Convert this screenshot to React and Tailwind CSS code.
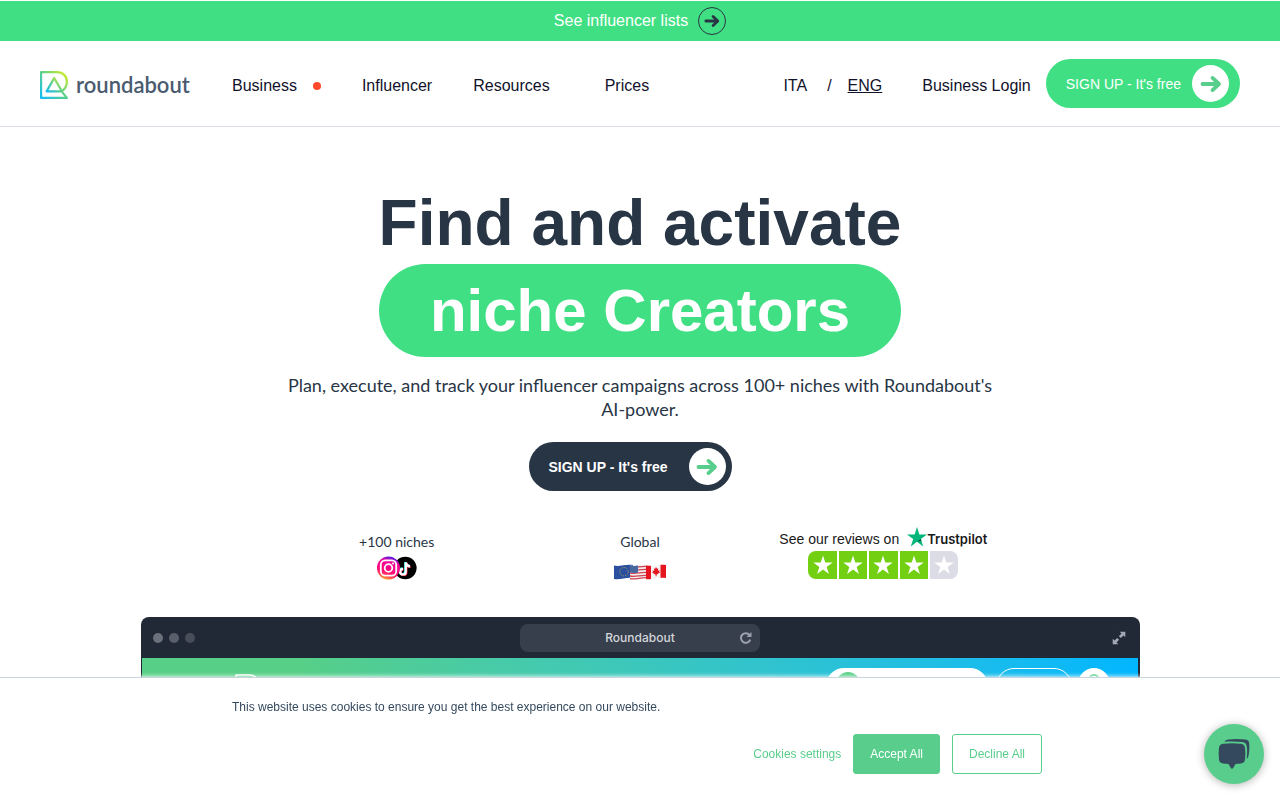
import React, { useState } from 'react';

const STAR = 'M12 1.6l2.5 7.7h8.1l-6.6 4.8 2.5 7.7L12 17l-6.5 4.8L8 14.1 1.4 9.3h8.1z';

function Arrow({ className }) {
  return (
    <svg viewBox="0 0 22 18" className={className} fill="none" stroke="currentColor" strokeWidth="3.8" strokeLinecap="round" strokeLinejoin="round">
      <path d="M2.5 9H18M12.5 2.9L19 9l-6.5 6.1" />
    </svg>
  );
}

function LogoMark({ className, stroke = 'url(#logo)', strokeWidth = 2.2 }) {
  return (
    <svg viewBox="0 0 28 28" className={className} fill="none" stroke={stroke} strokeWidth={strokeWidth} strokeLinejoin="round" strokeLinecap="round">
      <defs>
        <linearGradient id="logo" x1="0" y1="1" x2="1" y2="0">
          <stop offset="0" stopColor="#12bdf5" />
          <stop offset="0.5" stopColor="#5ad08c" />
          <stop offset="1" stopColor="#dcee1c" />
        </linearGradient>
      </defs>
      <path d="M1.1 1.1H17c6 0 9.9 4.2 9.9 9.6 0 4-1.9 7.3-5.3 9.7L26.9 26.9H1.1z" />
      <path d="M14.2 7L6.6 20.400h13.400c1 0 1.500-.8 1-1.600z" />
    </svg>
  );
}

function SocialIcons() {
  return (
    <svg viewBox="0 0 40 24" className="h-6 w-10">
      <defs>
        <linearGradient id="insta" x1="0.2" y1="1" x2="0.5" y2="0">
          <stop offset="0" stopColor="#ffc20e" />
          <stop offset="0.22" stopColor="#ff3a5c" />
          <stop offset="0.4" stopColor="#ff0a78" />
          <stop offset="0.8" stopColor="#f0079b" />
          <stop offset="1" stopColor="#5a1be0" />
        </linearGradient>
      </defs>
      <circle cx="28.3" cy="12" r="11.3" fill="#000" />
      <g fill="none" strokeWidth="2.2">
        <path d="M28.2 6v9.200a2.800 2.800 0 1 1-2.800-2.800M28.200 6c.3 2.300 1.800 3.700 4.200 3.900" stroke="#25f4ee" />
        <path d="M29.400 7v9.200a2.800 2.800 0 1 1-2.800-2.800M29.400 7c.3 2.300 1.800 3.700 4.200 3.900" stroke="#fe2c55" />
        <path d="M28.800 6.500v9.200a2.800 2.800 0 1 1-2.800-2.800M28.800 6.500c.3 2.300 1.800 3.700 4.200 3.900" stroke="#fff" />
      </g>
      <circle cx="11.5" cy="12" r="11.5" fill="url(#insta)" />
      <g fill="none" stroke="#fff" strokeWidth="1.8">
        <rect x="3.8" y="4.300" width="15.400" height="15.400" rx="4.400" />
        <circle cx="11.500" cy="12" r="3.800" />
      </g>
      <circle cx="16" cy="7.600" r="1" fill="#fff" />
    </svg>
  );
}

function Flags() {
  return (
    <svg viewBox="0 0 52 16" className="h-4 w-[52px]">
      <path d="M0 1.500c6 1.500 11-1.500 19-.5v13c-7-1-12 2-19 1z" fill="#2a4f9e" />
      <circle cx="10" cy="7.700" r="4.200" fill="none" stroke="#b8a94f" strokeWidth="1" strokeDasharray="1 1.200" />
      <path d="M16 1.500c6 1.500 11-1.500 18-.5v13c-7-1-12 2-18 1z" fill="#f2eef0" />
      <path d="M16 3c6 1.300 11-1.500 18-.5M16 6c6 1.300 11-1.500 18-.5M16 9c6 1.300 11-1.500 18-.5M16 12c6 1.300 11-1.500 18-.5M16 14.600c6 1.300 11-1.500 18-.9" fill="none" stroke="#cf4250" strokeWidth="1.300" />
      <path d="M16 1.500c3 .7 5.500.4 8-.1v7c-2.500.5-5 .8-8 .2z" fill="#47689f" />
      <path d="M32 1.500c6 1.500 12-1.500 20-.5v13c-7-1-13 2-20 1z" fill="#f6f3f3" />
      <path d="M32 1.500c1.600.4 3.200.4 5 .2v13.200c-1.800.3-3.400.4-5 .1zM46.500.8c1.800-.1 3.600-.1 5.500.2v13c-1.900-.3-3.700-.3-5.500-.1z" fill="#e5141f" />
      <path d="M42 3l1 1.700 1.200-.5-.3 2.600 1.900-.8-.6 1.700.8.700-3.300 2.100-.2 1.700h-.8l-.2-1.700-3.200-1.700.7-.8-.6-1.600 1.900.5-.4-2.500 1.200.4z" fill="#e5141f" />
    </svg>
  );
}

function Rating() {
  return (
    <div className="flex gap-0.5 overflow-hidden rounded-lg" role="img" aria-label="4 out of 5 stars">
      {[1, 2, 3, 4, 5].map((n) => (
        <span key={n} className={`flex h-7 flex-1 items-center justify-center text-white ${n < 5 ? 'bg-[#73cf11]' : 'bg-[#dcdce6]'}`}>
          <svg viewBox="0 0 24 24" className="h-[22px] w-[22px]" fill="currentColor">
            <path d={STAR} />
          </svg>
        </span>
      ))}
    </div>
  );
}

function BrowserWindow() {
  return (
    <div className="mx-auto mt-[37px] w-full max-w-[999px] overflow-hidden rounded-t-lg bg-[#212936]">
      <div className="grid h-[41px] grid-cols-[1fr_240px_1fr] items-center px-3">
        <div className="flex gap-1.5">
          <span className="h-2.5 w-2.5 rounded-full bg-[#6b717b]" />
          <span className="h-2.5 w-2.5 rounded-full bg-[#5a606b]" />
          <span className="h-2.5 w-2.5 rounded-full bg-[#474e59]" />
        </div>
        <div className="flex h-7 items-center rounded-lg bg-[#383f4c] px-2 font-[Inter,sans-serif] text-xs font-medium text-[#d3d6db]">
          <span className="w-3" />
          <span className="flex-1 text-center">Roundabout</span>
          <svg viewBox="0 0 12 12" className="h-3 w-3 text-[#9ba1ac]" fill="none" stroke="currentColor" strokeWidth="2">
            <path d="M10.300 7.600A4.800 4.800 0 1 1 9.600 3" />
            <path d="M11.500 0v5H6.500z" fill="currentColor" stroke="none" />
          </svg>
        </div>
        <svg viewBox="0 0 14 14" className="mr-0.5 h-3.5 w-3.5 justify-self-end text-[#a3a9b4]" fill="currentColor">
          <path d="M7.700 0.700H13.300v5.600l-1.800-1.800-2.700 2.600-1.900-1.900 2.600-2.700zM6.300 13.300H.7V7.700l1.800 1.800 2.700-2.600 1.900 1.900-2.600 2.700z" />
        </svg>
      </div>
      <div className="ml-px mr-0.5 flex h-48 items-start bg-linear-to-r from-[#57cf86] from-15% to-[#00b6ff] pl-[93px] pr-7 pt-2.5">
        <LogoMark className="mr-auto mt-1.5 h-6 w-6" stroke="#fff" strokeWidth={1.6} />
        <div className="h-9 w-[162px] rounded-full bg-white px-2.5 pt-1">
          <div className="h-6 w-6 rounded-full bg-[#57cf86]" />
        </div>
        <div className="ml-2 mr-1.5 h-9 w-[76px] rounded-full border border-white" />
        <div className="flex h-8 w-8 items-start justify-center rounded-full bg-white pt-1.5">
          <div className="h-3 w-3 rounded-full border-2 border-[#57cf86]" />
        </div>
      </div>
    </div>
  );
}

function CookieBanner({ onClose }) {
  return (
    <div className="fixed inset-x-0 bottom-0 border-t border-[#cbd5e0] bg-white pb-[26px] pt-5 text-xs shadow-[0_-1px_4px_rgba(255,255,255,0.8)]">
      <div className="mx-auto max-w-[816px]">
        <p className="leading-[18px] text-[#34495e]">This website uses cookies to ensure you get the best experience on our website.</p>
        <div className="mr-1.5 mt-[18px] flex items-center justify-end gap-3">
          <button type="button" className="cursor-pointer text-[#59ce8c]">Cookies settings</button>
          <button type="button" onClick={onClose} className="h-10 cursor-pointer rounded-[3px] border border-[#59ce8c] bg-[#59ce8c] px-4 text-white">Accept All</button>
          <button type="button" onClick={onClose} className="h-10 cursor-pointer rounded-[3px] border border-[#59ce8c] bg-white px-4 text-[#59ce8c]">Decline All</button>
        </div>
      </div>
    </div>
  );
}

export default function App() {
  const [showCookies, setShowCookies] = useState(true);

  return (
    <div className="min-h-screen bg-white pt-px font-['Liberation_Sans',Arial,sans-serif] text-[#11112b]">
      {/* Announcement */}
      <a href="#lists" className="flex h-10 items-center justify-center gap-2.5 bg-[#41df83] text-white">
        See influencer lists
        <span className="flex h-7 w-7 items-center justify-center rounded-full border border-[#283545] text-[#283545]">
          <Arrow className="h-3.5 w-4" />
        </span>
      </a>

      {/* Header */}
      <header className="flex items-center border-b border-[#dcdce6] px-10 py-[18px]">
        <a href="#home" className="flex items-center gap-2 pt-0.5">
          <LogoMark className="h-7 w-7" />
          <span className="w-[114px] font-[Lato,sans-serif] text-[22px] font-semibold leading-7 text-[#4a5b70]">roundabout</span>
        </a>
        <nav className="ml-[42px] flex items-center gap-[41px] pt-1">
          <a href="#business" className="flex items-center gap-4">
            Business
            <span className="h-2 w-2 rounded-full bg-[#ff4b2b]" />
          </a>
          <a href="#influencer">Influencer</a>
          <a href="#resources" className="pr-3.5">Resources</a>
          <a href="#prices">Prices</a>
        </nav>
        <div className="ml-auto flex items-center">
          <div className="flex pt-1">
            <a href="#it">ITA</a>
            <span className="ml-5 mr-4">/</span>
            <a href="#en" className="underline">ENG</a>
            <a href="#login" className="ml-10 mr-[15px]">Business Login</a>
          </div>
          <a href="#signup" className="flex h-[49px] items-center gap-[11px] rounded-full bg-[#41df83] pl-5 pr-[11px] text-sm text-white">
            SIGN UP - It's free
            <span className="flex h-[37px] w-[37px] items-center justify-center rounded-full bg-white text-[#59ce8c]">
              <Arrow className="h-[18px] w-[22px]" />
            </span>
          </a>
        </div>
      </header>

      {/* Hero */}
      <main className="flex flex-col items-center pt-[59px] text-[#283545]">
        <h1 className="flex flex-col text-center font-bold">
          <span className="text-[64px] leading-[74px]">Find and activate</span>
          <span className="mt-1 rounded-full bg-[#41df83] text-[60px] leading-[93px] text-white">niche Creators</span>
        </h1>
        <p className="mt-4 max-w-[720px] text-center font-[Lato,sans-serif] text-lg leading-6">
          Plan, execute, and track your influencer campaigns across 100+ niches with Roundabout's AI-power.
        </p>
        <a href="#signup" className="mr-5 mt-[21px] flex h-[49px] items-center gap-[21px] rounded-full bg-[#283545] pl-5 pr-1.5 text-sm font-bold text-white">
          SIGN UP - It's free
          <span className="flex h-[37px] w-[37px] items-center justify-center rounded-full bg-white text-[#59ce8c]">
            <Arrow className="h-[18px] w-[22px]" />
          </span>
        </a>

        <div className="mt-9 grid w-full max-w-[730px] grid-cols-3 items-end justify-items-center text-sm">
          <div className="flex flex-col items-center gap-1 font-[Lato,sans-serif]">
            +100 niches
            <SocialIcons />
          </div>
          <div className="flex flex-col items-center gap-3 font-[Lato,sans-serif]">
            Global
            <Flags />
          </div>
          <div className="flex flex-col items-center whitespace-nowrap pb-px text-[#191919]">
            <a href="#reviews" className="flex h-6 items-center">
              See our reviews on
              <svg viewBox="0 0 24 24" className="mb-1 ml-2 h-5 w-5" fill="#00b67a">
                <path d="M12 0l2.900 9H24l-7.400 5.500 2.800 8.800L12 17.800l-7.400 5.500 2.800-8.800L0 9h9.100z" />
                <path d="M17.300 16.500l-.7-2L12 17.800z" fill="#005128" />
              </svg>
              <span className="font-[Inter,sans-serif] text-[13px] font-semibold">Trustpilot</span>
            </a>
            <div className="w-[150px]">
              <Rating />
            </div>
          </div>
        </div>

        <BrowserWindow />
      </main>

      {showCookies && <CookieBanner onClose={() => setShowCookies(false)} />}

      {/* Chat launcher */}
      <button type="button" aria-label="Open chat" className="fixed bottom-4 right-4 h-[60px] w-[60px] cursor-pointer rounded-full bg-[#59ce8c] shadow-[0_1px_8px_rgba(0,0,0,0.3)]">
        <svg viewBox="0 0 60 60" className="h-full w-full" fill="#34495e">
          <path d="M19 19.800c6-.8 12-.8 18 0 2.500.3 3.700 1.600 4 4 .5 4 .5 8 0 12-.3 2.200-1.600 3.400-4 3.700l-5.500.5-2.300 4c-.6 1-1.800 1-2.400 0l-2.300-4-5.500-.5c-2.400-.3-3.700-1.500-4-3.700-.5-4-.5-8 0-12 .3-2.400 1.500-3.700 4-4z" />
          <path d="M20.500 17.700c.8-1.400 2-2 4-2.200 5.300-.7 11-.7 17 0 2.300.3 3.400 1.400 3.700 3.700.4 4.500.2 8.500-.7 12.500-.4 1.700-.9 2.400-1.800 3 .5-4.700.6-8.500.1-12-.4-2.900-1.900-4.300-4.600-4.600-5.900-.8-11.700-.9-17.700-.4z" />
        </svg>
      </button>
    </div>
  );
}
